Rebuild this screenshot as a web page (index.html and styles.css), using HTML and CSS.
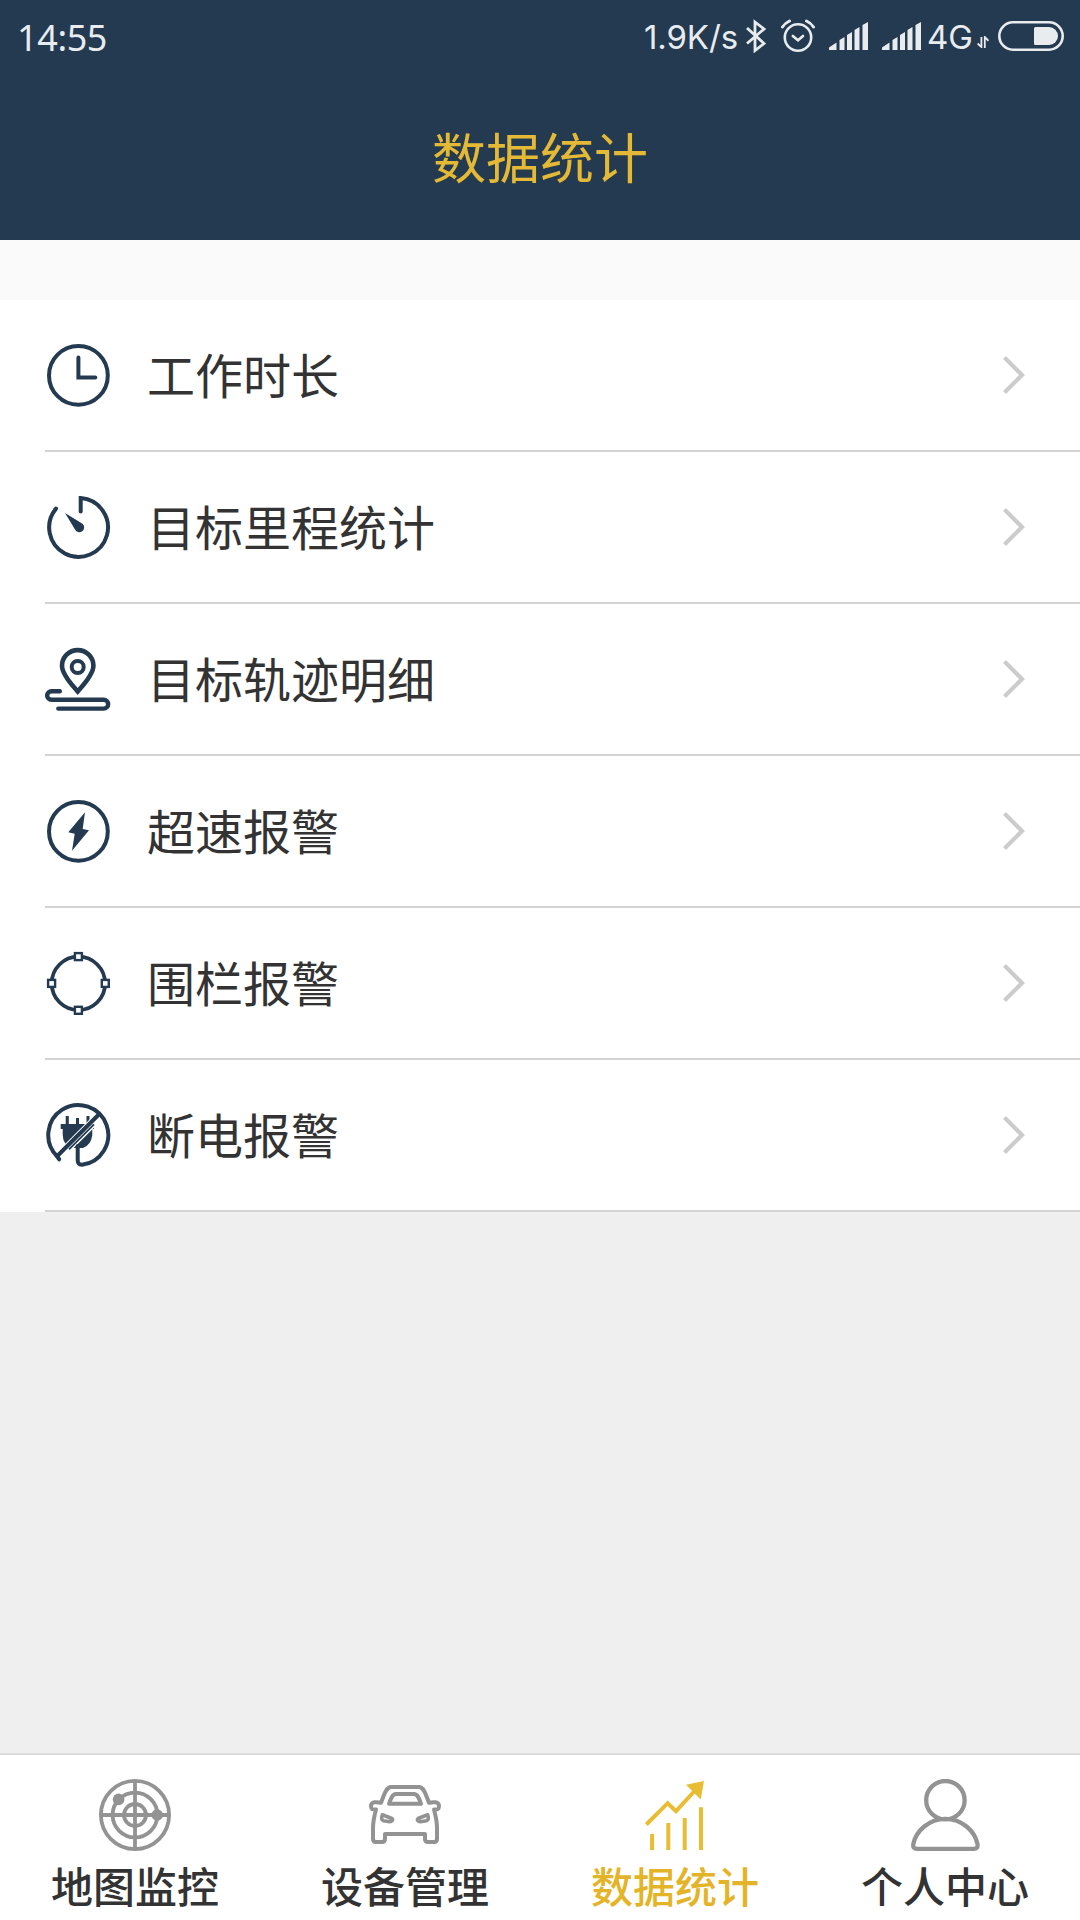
FILE: index.html
```html
<!DOCTYPE html>
<html lang="zh-CN">
<head>
    <meta charset="UTF-8">
    <meta name="viewport" content="width=device-width, initial-scale=1.0">
    <title>数据统计</title>
    <link rel="stylesheet" href="styles.css">
</head>
<body>

<!-- Header -->
<header class="header">
    <div class="status-bar">
        <span class="time">14:55</span>
        <div class="status-right">
            <span class="speed">1.9K/s</span>
            <svg class="bluetooth" width="20" height="34" viewBox="0 0 20 34" fill="none" stroke="currentColor" stroke-width="2.8">
                <path d="M1 9L18 24.5L9 31.5V3L18 10L1 24.5"/>
            </svg>
            <svg class="alarm" width="34" height="34" viewBox="0 0 34 34" fill="none" stroke="currentColor" stroke-width="2.6" stroke-linecap="round">
                <circle cx="17" cy="18.5" r="13.2"/>
                <path d="M11.8 17L17 21.3L22 17"/>
                <path d="M1.5 8Q4 4 8.5 2M25.5 2Q30 4 32.5 8" stroke-width="3"/>
            </svg>
            <svg class="signal" width="39" height="28" viewBox="0 0 39 28" fill="currentColor">
                <path d="M0 28V25.5L7.5 20.5V28ZM10.5 28V18L15.5 15V28ZM18 28V13L23 10V28ZM25.5 28V8L30.5 5V28ZM33.5 28V3L39 0V28Z"/>
            </svg>
            <svg class="signal" width="39" height="28" viewBox="0 0 39 28" fill="currentColor">
                <path d="M0 28V25.5L7.5 20.5V28ZM10.5 28V18L15.5 15V28ZM18 28V13L23 10V28ZM25.5 28V8L30.5 5V28ZM33.5 28V3L39 0V28Z"/>
            </svg>
            <span class="network">4G</span>
            <svg class="data" width="12" height="12" viewBox="0 0 12 12" fill="none" stroke="currentColor" stroke-width="1.8">
                <path d="M4.4 1V11L.6 7.5M7.8 12V1L11.5 4.8"/>
            </svg>
            <svg class="battery" width="66" height="30" viewBox="0 0 66 30">
                <rect x="1.3" y="1.3" width="63.4" height="27.4" rx="13.7" fill="none" stroke="currentColor" stroke-width="2.6"/>
                <path d="M37.5 6H51A9 9 0 0 1 51 24H37.5Q36 24 36 22.5V7.5Q36 6 37.5 6Z" fill="currentColor"/>
            </svg>
        </div>
    </div>
    <h1 class="title">数据统计</h1>
</header>

<!-- Report list -->
<main class="content">
    <ul class="list">
        <li class="item">
            <svg class="item-icon" viewBox="0 0 66 66">
                <circle cx="33.4" cy="33.4" r="29.4"/>
                <path d="M33.4 15.5V35.6H50.3"/>
            </svg>
            <span class="item-label">工作时长</span>
            <svg class="arrow" viewBox="0 0 22 38"><path d="M1.5 1.5L19 19L1.5 36.5"/></svg>
        </li>
        <li class="item">
            <svg class="item-icon" viewBox="0 0 66 66">
                <path d="M11 14.6A29.4 29.4 0 1 0 35.7 4.1V17.4"/>
                <path class="solid" d="M20 19L37.5 29.8A4.8 4.8 0 1 1 30 35.4Z"/>
            </svg>
            <span class="item-label">目标里程统计</span>
            <svg class="arrow" viewBox="0 0 22 38"><path d="M1.5 1.5L19 19L1.5 36.5"/></svg>
        </li>
        <li class="item">
            <svg class="item-icon" viewBox="0 0 66 66">
                <path d="M32.7 45.5C28 40 17 29 17 19.8A15.7 15.7 0 0 1 48.4 19.8C48.4 29 37.4 40 32.7 45.5Z" stroke-width="4.6"/>
                <circle cx="32.7" cy="21" r="6"/>
                <path d="M14.8 45.2H6.4A4.2 4.2 0 0 0 6.4 53.7H58.7A4.4 4.4 0 0 1 58.7 62.6H13.3" stroke-width="4.4"/>
            </svg>
            <span class="item-label">目标轨迹明细</span>
            <svg class="arrow" viewBox="0 0 22 38"><path d="M1.5 1.5L19 19L1.5 36.5"/></svg>
        </li>
        <li class="item">
            <svg class="item-icon" viewBox="0 0 66 66">
                <circle cx="33.4" cy="33.4" r="29.4"/>
                <path class="solid" d="M40 14.3L23.3 34.3L29.7 35.8L27 52.7L44 32.3L37.7 31Z"/>
            </svg>
            <span class="item-label">超速报警</span>
            <svg class="arrow" viewBox="0 0 22 38"><path d="M1.5 1.5L19 19L1.5 36.5"/></svg>
        </li>
        <li class="item">
            <svg class="item-icon" viewBox="0 0 66 66">
                <circle cx="33.4" cy="33.4" r="26.7" stroke-width="3.8"/>
                <g class="node">
                    <rect x="29.9" y="3.1" width="7" height="7"/>
                    <rect x="29.9" y="56.8" width="7" height="7"/>
                    <rect x="3.1" y="29.9" width="7" height="7"/>
                    <rect x="56.8" y="29.9" width="7" height="7"/>
                </g>
            </svg>
            <span class="item-label">围栏报警</span>
            <svg class="arrow" viewBox="0 0 22 38"><path d="M1.5 1.5L19 19L1.5 36.5"/></svg>
        </li>
        <li class="item">
            <svg class="item-icon" viewBox="0 0 66 66">
                <path class="solid" d="M20.7 14H23.8V22H31V16H34V22H41.5V14H44.5V22H49V27H47.3V33Q46 43 38 46H27Q18 43 17.7 33V27H15.7V22H20.7Z"/>
                <path d="M50 18.4L20 48.4" stroke="#fff" stroke-width="9" stroke-linecap="butt"/>
                <path d="M14.2 57.3L12 54.3L53.3 13"/>
                <path d="M49 22.3L24 47.3" stroke-width="1.8" stroke-linecap="butt"/>
                <path d="M12 54.2A30 30 0 1 1 37 62.8Q32.7 63 32.7 58V44"/>
            </svg>
            <span class="item-label">断电报警</span>
            <svg class="arrow" viewBox="0 0 22 38"><path d="M1.5 1.5L19 19L1.5 36.5"/></svg>
        </li>
    </ul>
</main>

<!-- Bottom tabs -->
<nav class="tab-bar">
    <a class="tab">
        <svg class="tab-icon" viewBox="0 0 72 72" stroke-width="3.8">
            <circle cx="36" cy="36" r="34.1"/>
            <circle cx="36" cy="36" r="22.4"/>
            <circle cx="36" cy="36" r="11"/>
            <path d="M36 2V70M2 36H70"/>
            <circle class="dot" cx="19.6" cy="20.4" r="5.8"/>
            <circle class="dot" cx="58.2" cy="36" r="5.8"/>
        </svg>
        <span>地图监控</span>
    </a>
    <a class="tab">
        <svg class="tab-icon" viewBox="0 0 72 72" stroke-width="4" stroke-linejoin="round">
            <path d="M12 23.8C15 16 17 8 22 8H50C55 8 57 16 60 23.8C64 22.8 70 22.5 70 27C70 31 68 30.5 65 30.5C67 38 68 43 68 49V60Q68 63 65 63H59Q56 63 56 60V55H16V60Q16 63 13 63H7Q4 63 4 60V49C4 43 5 38 7 30.5C4 30.5 2 31 2 27C2 22.5 8 22.8 12 23.8Z"/>
            <path d="M20 24.8C22 19 23.5 15 27 15H45C48.5 15 50 19 52 24.8Z"/>
            <path d="M13.3 35.8L23 39.5C25 41.5 22 43 19 42.5L14.5 41.8Q11.5 41 13.3 35.8ZM58.7 35.8L49 39.5C47 41.5 50 43 53 42.5L57.5 41.8Q60.5 41 58.7 35.8Z" stroke-width="3.6"/>
        </svg>
        <span>设备管理</span>
    </a>
    <a class="tab active">
        <svg class="tab-icon" viewBox="0 0 72 72" stroke-width="4">
            <path d="M7.3 45.5L28.7 24.2L37 32.2L57 10.5"/>
            <path class="dot" d="M65 2L47 5.8L61.7 20.6Z"/>
            <path d="M13.1 71V55M29.3 71V44M45.7 71V39M62 71V28.3"/>
        </svg>
        <span>数据统计</span>
    </a>
    <a class="tab">
        <svg class="tab-icon" viewBox="0 0 72 72" stroke-width="4.3">
            <circle cx="36.4" cy="21.2" r="19.2"/>
            <path d="M36.4 39.8C20 39.8 7 52 4.3 65Q3.5 69.8 8 69.8H64.8Q69.3 69.8 68.5 65C65.8 52 52.8 39.8 36.4 39.8Z"/>
        </svg>
        <span>个人中心</span>
    </a>
</nav>

</body>
</html>
```
FILE: styles.css
```css
* {
    box-sizing: border-box;
}

body {
    margin: 0;
    height: 100vh;
    display: flex;
    flex-direction: column;
    background-color: #efefef;
    color: #333;
    font-family: "Noto Sans CJK SC", sans-serif;
}

svg {
    display: block;
    flex-shrink: 0;
}

.header {
    height: 240px;
    background-color: #243a50;
}

.status-bar {
    display: flex;
    justify-content: space-between;
    align-items: center;
    height: 72px;
    padding: 0 16px 0 17px;
    color: #e9ecef;
}

.time {
    padding-top: 3px;
    font-family: "Noto Sans", sans-serif;
    font-size: 36px;
    line-height: 40px;
    letter-spacing: -0.4px;
}

.status-right {
    display: flex;
    align-items: center;
    font-family: Inter, sans-serif;
    font-size: 33px;
    line-height: 40px;
}

.speed {
    padding-top: 2px;
    letter-spacing: -0.1px;
}

.bluetooth {
    margin-left: 8px;
}

.alarm {
    margin-left: 15px;
}

.signal {
    margin-left: 14px;
}

.network {
    margin-left: 6px;
    padding-top: 2px;
}

.data {
    margin: 12px 0 0 4px;
}

.battery {
    margin-left: 9px;
}

.title {
    margin: 0;
    padding-top: 34px;
    color: #e4b935;
    font-size: 54px;
    font-weight: 400;
    line-height: 100px;
    text-align: center;
}

.content {
    flex: 1;
}

.list {
    margin: 0;
    padding: 0;
    border-top: 60px solid #fafafa;
    background-color: #fff;
    list-style: none;
}

.item {
    display: flex;
    align-items: center;
    height: 152px;
    padding: 0 55px 2px 45px;
    /* divider starts at the icon, not at the screen edge */
    background: linear-gradient(#d3d3d3, #d3d3d3) no-repeat 45px 100% / 100% 2px;
}

.item-icon {
    width: 66px;
    height: 66px;
    fill: none;
    stroke: #243a50;
    stroke-width: 4;
    stroke-linecap: round;
}

.item-icon .solid {
    fill: #243a50;
    stroke: none;
}

.item-icon .node {
    fill: #fff;
    stroke-width: 2.4;
}

.item-label {
    flex: 1;
    margin-left: 36px;
    padding-bottom: 4px;
    font-size: 48px;
    line-height: 70px;
}

.arrow {
    width: 22px;
    height: 38px;
    fill: none;
    stroke: #ccc;
    stroke-width: 4.2;
}

.tab-bar {
    display: flex;
    height: 167px;
    border-top: 2px solid #dcdcdc;
    background-color: #fff;
}

.tab {
    flex: 1;
    display: flex;
    flex-direction: column;
    align-items: center;
    padding-top: 24px;
    font-size: 42px;
    font-weight: 500;
    line-height: 68px;
}

.tab-icon {
    width: 72px;
    height: 72px;
    fill: none;
    stroke: #939393;
}

.tab-icon .dot {
    fill: #939393;
    stroke: none;
}

.active {
    color: #e4b428;
}

.active .tab-icon {
    stroke: #e8bd33;
}

.active .tab-icon .dot {
    fill: #e8bd33;
}
```
